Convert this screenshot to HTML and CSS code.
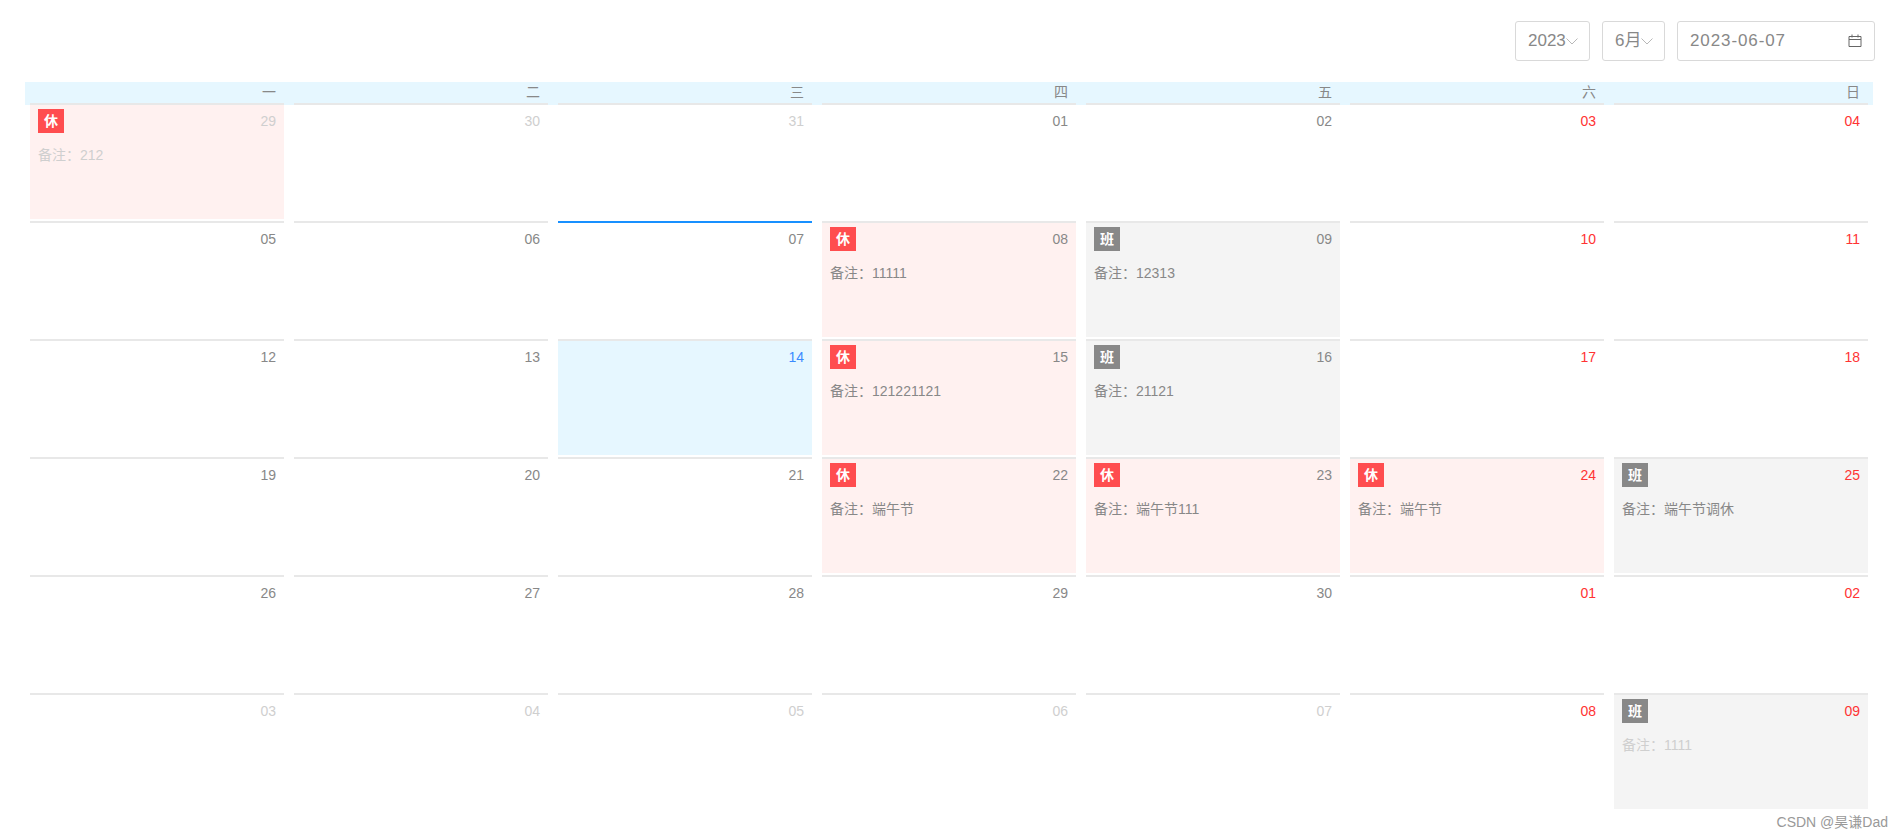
FILE: index.html
```html
<!DOCTYPE html>
<html lang="zh">
<head>
    <title>Calendar</title>
    <link rel="stylesheet" href="styles.css">
</head>
<body>
    <!-- Toolbar -->
    <div class="toolbar">
        <div class="select select-year">
            <span>2023</span>
            <svg class="arrow" viewBox="0 0 12 7"><path d="M0.5 0.5 L6 6 L11.5 0.5"/></svg>
        </div>
        <div class="select select-month">
            <span>6月</span>
            <svg class="arrow" viewBox="0 0 12 7"><path d="M0.5 0.5 L6 6 L11.5 0.5"/></svg>
        </div>
        <div class="select select-date">
            <span class="date-value">2023-06-07</span>
            <svg class="calendar-icon" viewBox="0 0 14 14"><path d="M1 2.5 H13 V12.5 H1 Z M1 5.5 H13 M4 0.5 V3.5 M10 0.5 V3.5"/></svg>
        </div>
    </div>

    <!-- Weekday header -->
    <div class="week-head">
        <div>一</div>
        <div>二</div>
        <div>三</div>
        <div>四</div>
        <div>五</div>
        <div>六</div>
        <div>日</div>
    </div>

    <!-- Month grid -->
    <div class="month">
        <div class="cell rest other"><div class="cell-top"><span class="tag tag-rest">休</span><span class="date">29</span></div><p class="note">备注：212</p></div>
        <div class="cell other"><div class="cell-top"><span class="date">30</span></div></div>
        <div class="cell other"><div class="cell-top"><span class="date">31</span></div></div>
        <div class="cell"><div class="cell-top"><span class="date">01</span></div></div>
        <div class="cell"><div class="cell-top"><span class="date">02</span></div></div>
        <div class="cell weekend"><div class="cell-top"><span class="date">03</span></div></div>
        <div class="cell weekend"><div class="cell-top"><span class="date">04</span></div></div>

        <div class="cell"><div class="cell-top"><span class="date">05</span></div></div>
        <div class="cell"><div class="cell-top"><span class="date">06</span></div></div>
        <div class="cell today"><div class="cell-top"><span class="date">07</span></div></div>
        <div class="cell rest"><div class="cell-top"><span class="tag tag-rest">休</span><span class="date">08</span></div><p class="note">备注：11111</p></div>
        <div class="cell work"><div class="cell-top"><span class="tag tag-work">班</span><span class="date">09</span></div><p class="note">备注：12313</p></div>
        <div class="cell weekend"><div class="cell-top"><span class="date">10</span></div></div>
        <div class="cell weekend"><div class="cell-top"><span class="date">11</span></div></div>

        <div class="cell"><div class="cell-top"><span class="date">12</span></div></div>
        <div class="cell"><div class="cell-top"><span class="date">13</span></div></div>
        <div class="cell selected"><div class="cell-top"><span class="date">14</span></div></div>
        <div class="cell rest"><div class="cell-top"><span class="tag tag-rest">休</span><span class="date">15</span></div><p class="note">备注：121221121</p></div>
        <div class="cell work"><div class="cell-top"><span class="tag tag-work">班</span><span class="date">16</span></div><p class="note">备注：21121</p></div>
        <div class="cell weekend"><div class="cell-top"><span class="date">17</span></div></div>
        <div class="cell weekend"><div class="cell-top"><span class="date">18</span></div></div>

        <div class="cell"><div class="cell-top"><span class="date">19</span></div></div>
        <div class="cell"><div class="cell-top"><span class="date">20</span></div></div>
        <div class="cell"><div class="cell-top"><span class="date">21</span></div></div>
        <div class="cell rest"><div class="cell-top"><span class="tag tag-rest">休</span><span class="date">22</span></div><p class="note">备注：端午节</p></div>
        <div class="cell rest"><div class="cell-top"><span class="tag tag-rest">休</span><span class="date">23</span></div><p class="note">备注：端午节111</p></div>
        <div class="cell rest weekend"><div class="cell-top"><span class="tag tag-rest">休</span><span class="date">24</span></div><p class="note">备注：端午节</p></div>
        <div class="cell work weekend"><div class="cell-top"><span class="tag tag-work">班</span><span class="date">25</span></div><p class="note">备注：端午节调休</p></div>

        <div class="cell"><div class="cell-top"><span class="date">26</span></div></div>
        <div class="cell"><div class="cell-top"><span class="date">27</span></div></div>
        <div class="cell"><div class="cell-top"><span class="date">28</span></div></div>
        <div class="cell"><div class="cell-top"><span class="date">29</span></div></div>
        <div class="cell"><div class="cell-top"><span class="date">30</span></div></div>
        <div class="cell weekend"><div class="cell-top"><span class="date">01</span></div></div>
        <div class="cell weekend"><div class="cell-top"><span class="date">02</span></div></div>

        <div class="cell other"><div class="cell-top"><span class="date">03</span></div></div>
        <div class="cell other"><div class="cell-top"><span class="date">04</span></div></div>
        <div class="cell other"><div class="cell-top"><span class="date">05</span></div></div>
        <div class="cell other"><div class="cell-top"><span class="date">06</span></div></div>
        <div class="cell other"><div class="cell-top"><span class="date">07</span></div></div>
        <div class="cell weekend other"><div class="cell-top"><span class="date">08</span></div></div>
        <div class="cell work weekend other"><div class="cell-top"><span class="tag tag-work">班</span><span class="date">09</span></div><p class="note">备注：1111</p></div>
    </div>

    <div class="watermark">CSDN @昊谦Dad</div>
</body>
</html>
```

FILE: styles.css
```css
/* General Styles */
html, body {
    height: 100%;
}

body {
    position: relative;
    margin: 0;
    padding: 21px 30px 0 25px;
    box-sizing: border-box;
    overflow: hidden;
    background-color: #ffffff;
    color: #888888;
    font-family: "Liberation Sans", "Noto Sans CJK SC", sans-serif;
    font-size: 14px;
}

/* Toolbar */
.toolbar {
    display: flex;
    justify-content: flex-end;
    gap: 12px;
    margin-right: -2px;
}

.select {
    display: flex;
    align-items: center;
    justify-content: space-between;
    box-sizing: border-box;
    height: 40px;
    padding: 0 12px;
    border: 1px solid #d9d9d9;
    border-radius: 3px;
    font-size: 17px;
    line-height: 20px;
    white-space: nowrap;
    color: #888888;
}

.select-year {
    width: 75px;
}

.select-month {
    width: 63px;
}

.select-date {
    width: 198px;
}

.date-value {
    letter-spacing: 0.9px;
}

.arrow {
    flex: none;
    width: 12px;
    height: 7px;
    fill: none;
    stroke: #b8b8b8;
    stroke-width: 1;
}

.calendar-icon {
    flex: none;
    width: 14px;
    height: 14px;
    fill: none;
    stroke: #666666;
    stroke-width: 1;
}

/* Weekday header */
.week-head {
    display: grid;
    grid-template-columns: repeat(7, 1fr);
    height: 23px;
    margin-top: 21px;
    background-color: #e6f7ff;
    line-height: 21px;
    text-align: right;
}

.week-head div {
    padding-right: 13px;
}

/* Month grid */
.month {
    display: grid;
    grid-template-columns: repeat(7, 1fr);
    grid-auto-rows: 118px;
    margin-top: -2px;
}

.cell {
    box-sizing: border-box;
    height: 116px;
    margin: 0 5px;
    padding: 4px 8px;
    border-top: 2px solid #e8e8e8;
}

.cell-top {
    display: flex;
    align-items: flex-start;
    justify-content: space-between;
}

.date {
    margin-left: auto;
    line-height: 24px;
}

.tag {
    width: 26px;
    height: 24px;
    color: #ffffff;
    font-weight: 700;
    line-height: 24px;
    text-align: center;
}

.tag-rest {
    background-color: #ff4d4f;
}

.tag-work {
    background-color: #888888;
}

.note {
    margin: 12px 0 0;
    font-size: 14px;
    line-height: 20px;
}

/* Cell states */
.rest {
    background-color: #fff1f0;
}

.work {
    background-color: #f4f4f4;
}

.weekend .date {
    color: #ff3333;
}

.other .date,
.other .note {
    color: #cfcfcf;
}

.weekend.other .date {
    color: #ff3333;
}

.today {
    border-top-color: #1890ff;
}

.selected {
    background-color: #e6f7ff;
}

.selected .date {
    color: #3b8bff;
}

/* Overlay text from the image host */
.watermark {
    position: absolute;
    right: 15px;
    bottom: 9px;
    color: #999999;
    font-size: 14px;
}
```
